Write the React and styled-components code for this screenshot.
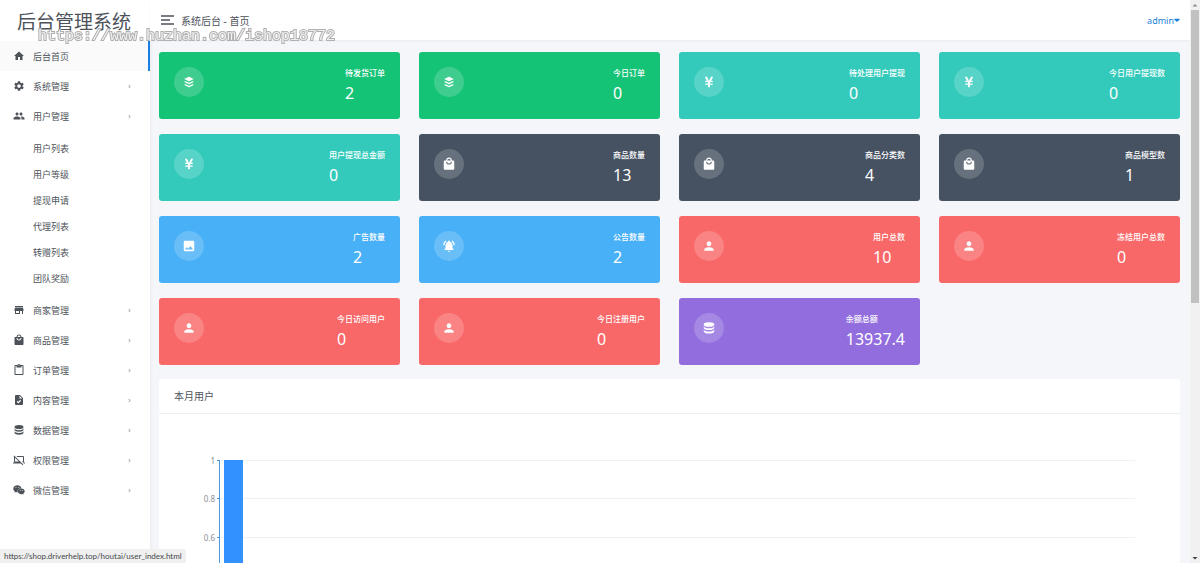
import styled, { createGlobalStyle, css } from "styled-components"
import {
    MdHome, MdSettings, MdPeople, MdStore, MdLocalMall, MdOutlineContentPaste,
    MdChevronRight, MdNotificationsActive, MdPerson, MdImage
} from "react-icons/md"
import { FaBuffer, FaYenSign, FaWeixin, FaCaretDown } from "react-icons/fa"

function FileCheckIcon() {
    return (
        <svg viewBox="0 0 24 24" fill="currentColor" fillRule="evenodd">
            <path d="M14 2H6a2 2 0 0 0-2 2v16a2 2 0 0 0 2 2h12a2 2 0 0 0 2-2V8l-6-6zM13 3.500 18.500 9H13V3.500zM10.500 19l5.500-5.500-1.500-1.800-4 4-1.700-1.700L7.300 15.500z" />
        </svg>
    )
}

function LaptopOffIcon() {
    return (
        <svg viewBox="0 0 24 24" fill="currentColor" fillRule="evenodd">
            <path d="M1 4.270 2.280 3 20.500 21.220 19.230 22.500 15.730 19H0v-2h4a2 2 0 0 1-2-2V6c0-.22.04-.43.1-.63L1 4.270zM4 15h7.730L4 7.270V15z" />
            <path d="M20 4a2 2 0 0 1 2 2v9a2 2 0 0 1-2 2h4v2h-2.180l-4-4H20V6H8.820l-2-2H20z" />
        </svg>
    )
}

function DadosIcon() {
    return (
        <svg viewBox="0 0 24 24" fill="currentColor">
            <ellipse cx="12" cy="6" rx="9" ry="4" />
            <path d="M3 8.500c0 2.200 4 4 9 4s9-1.800 9-4v3c0 2.200-4 4-9 4s-9-1.800-9-4z" />
            <path d="M3 14c0 2.200 4 4 9 4s9-1.800 9-4v3.500c0 2.200-4 4-9 4s-9-1.800-9-4z" />
        </svg>
    )
}

const menu = [
    { nome: "后台首页", Icone: MdHome, ativo: true },
    { nome: "系统管理", Icone: MdSettings },
    {
        nome: "用户管理",
        Icone: MdPeople,
        filhos: ["用户列表", "用户等级", "提现申请", "代理列表", "转赠列表", "团队奖励"]
    },
    { nome: "商家管理", Icone: MdStore },
    { nome: "商品管理", Icone: MdLocalMall },
    { nome: "订单管理", Icone: MdOutlineContentPaste },
    { nome: "内容管理", Icone: FileCheckIcon },
    { nome: "数据管理", Icone: DadosIcon },
    { nome: "权限管理", Icone: LaptopOffIcon },
    { nome: "微信管理", Icone: FaWeixin },
]

const cores = {
    verde: "#15c377",
    ciano: "#33cabb",
    escuro: "#465161",
    azul: "#48b0f7",
    vermelho: "#f96868",
    roxo: "#926dde",
}

const cards = [
    { nome: "待发货订单", valor: "2", cor: cores.verde, Icone: FaBuffer },
    { nome: "今日订单", valor: "0", cor: cores.verde, Icone: FaBuffer },
    { nome: "待处理用户提现", valor: "0", cor: cores.ciano, Icone: FaYenSign },
    { nome: "今日用户提现数", valor: "0", cor: cores.ciano, Icone: FaYenSign },
    { nome: "用户提现总金额", valor: "0", cor: cores.ciano, Icone: FaYenSign },
    { nome: "商品数量", valor: "13", cor: cores.escuro, Icone: MdLocalMall, grande: true },
    { nome: "商品分类数", valor: "4", cor: cores.escuro, Icone: MdLocalMall, grande: true },
    { nome: "商品模型数", valor: "1", cor: cores.escuro, Icone: MdLocalMall, grande: true },
    { nome: "广告数量", valor: "2", cor: cores.azul, Icone: MdImage, grande: true },
    { nome: "公告数量", valor: "2", cor: cores.azul, Icone: MdNotificationsActive, grande: true },
    { nome: "用户总数", valor: "10", cor: cores.vermelho, Icone: MdPerson, grande: true },
    { nome: "冻结用户总数", valor: "0", cor: cores.vermelho, Icone: MdPerson, grande: true },
    { nome: "今日访问用户", valor: "0", cor: cores.vermelho, Icone: MdPerson, grande: true },
    { nome: "今日注册用户", valor: "0", cor: cores.vermelho, Icone: MdPerson, grande: true },
    { nome: "余额总额", valor: "13937.4", cor: cores.roxo, Icone: DadosIcon, grande: true },
]

const escala = ["1", "0.8", "0.6"]

function ItemMenu({ item }) {
    const { nome, Icone, ativo, filhos } = item

    return (
        <li>
            <LinkMenu href="#" $ativo={ativo}>
                <Icone />
                <span>{nome}</span>
                {!ativo && <SetaMenu />}
            </LinkMenu>
            {filhos && <SubMenu>
                {filhos.map(filho => (
                    <li key={filho}>
                        <LinkSubMenu href="#">{filho}</LinkSubMenu>
                    </li>
                ))}
            </SubMenu>}
        </li>
    )
}

function CardResumo({ card }) {
    const { nome, valor, cor, Icone, grande } = card

    return (
        <CardWrapper $cor={cor}>
            <Circulo $grande={grande}><Icone /></Circulo>
            <div>
                <NomeCard>{nome}</NomeCard>
                <ValorCard>{valor}</ValorCard>
            </div>
        </CardWrapper>
    )
}

function GraficoUsuarios() {
    return (
        <Grafico role="img" aria-label="本月用户">
            {escala.map((valor, i) => {
                const y = 12.5 + Math.round(i * 38.4)
                return (
                    <g key={valor}>
                        <text x="26" y={y + 3} textAnchor="end">{valor}</text>
                        <line x1="31" x2="100%" y1={y} y2={y} stroke="#edf2f5" />
                        <line x1="28" x2="31" y1={y} y2={y} stroke="#4b96dc" />
                    </g>
                )
            })}
            <line x1="30.5" x2="30.5" y1="12" y2="205" stroke="#4b96dc" />
            <rect x="35" y="12" width="19" height="192" fill="#3391ff" />
        </Grafico>
    )
}

export default function App() {
    return (
        <>
            <EstiloGlobal />
            <Pagina>
                <BarraLateral>
                    <Logo href="#">后台管理系统</Logo>
                    <nav>
                        <ListaMenu>
                            {menu.map(item => <ItemMenu key={item.nome} item={item} />)}
                        </ListaMenu>
                    </nav>
                </BarraLateral>
                <Conteudo>
                    <Topo>
                        <BotaoMenu aria-label="菜单">
                            <svg width="13" height="10" viewBox="0 0 13 10" stroke="currentColor" strokeWidth="1.3">
                                <path d="M0 1h13M0 5h9M0 9h13" />
                            </svg>
                        </BotaoMenu>
                        <Titulo>系统后台 - 首页</Titulo>
                        <BotaoUsuario>admin<FaCaretDown /></BotaoUsuario>
                    </Topo>
                    <Principal>
                        <GradeCards>
                            {cards.map(card => <CardResumo key={card.nome} card={card} />)}
                        </GradeCards>
                        <Painel>
                            <TituloPainel>本月用户</TituloPainel>
                            <CorpoPainel>
                                <GraficoUsuarios />
                            </CorpoPainel>
                        </Painel>
                    </Principal>
                </Conteudo>
                <Rolagem aria-hidden="true">
                    <SetaRolagem viewBox="0 0 10 10" fill="#8a8a8a"><path d="M2.500 6.500h5L5 4z" /></SetaRolagem>
                    <Polegar />
                    <SetaRolagem viewBox="0 0 10 10" fill="#404040"><path d="M2.500 4h5L5 6.500z" /></SetaRolagem>
                </Rolagem>
            </Pagina>
            <MarcaDagua>https://www.huzhan.com/ishop18772</MarcaDagua>
            <StatusLink>https://shop.driverhelp.top/houtai/user_index.html</StatusLink>
        </>
    )
}

const EstiloGlobal = createGlobalStyle`
* {
box-sizing: border-box;
}
body {
margin: 0;
overflow: hidden;
background-color: #f5f6fa;
color: #4d5259;
font-family: "Noto Sans", "Noto Sans CJK SC", sans-serif;
font-size: 9px;
}
ul, h1, h2, p {
margin: 0;
padding: 0;
font-weight: 400;
list-style-type: none;
}
a {
color: inherit;
text-decoration: none;
}
button {
display: flex;
align-items: center;
padding: 0;
border: none;
background: none;
color: inherit;
font: inherit;
cursor: pointer;
}
`

const Pagina = styled.div`
display: flex;
height: 100vh;
overflow: hidden;
`

const BarraLateral = styled.aside`
flex: none;
width: 150px;
background-color: white;
box-shadow: 0 0 4px rgba(0, 0, 0, 0.08);
`

const Logo = styled.a`
display: flex;
align-items: center;
height: 41px;
padding-left: 17px;
font-family: KaiTi, STKaiti, "Noto Sans CJK SC", sans-serif;
font-size: 19px;
line-height: 20px;
white-space: nowrap;
`

const ListaMenu = styled.ul`
display: flex;
flex-direction: column;
`

const LinkMenu = styled.a`
display: flex;
align-items: center;
gap: 8px;
height: 30px;
padding: 0 17px 0 13px;
${props => props.$ativo && css`
background-color: #fafafa;
border-right: 2px solid #1a7fe0;
`}
svg {
width: 12px;
height: 12px;
}
span {
flex: 1;
}
`

const SetaMenu = styled(MdChevronRight)`
&& {
width: 7px;
height: 7px;
color: #888d93;
}
`

const SubMenu = styled.ul`
padding: 4px 0;
`

const LinkSubMenu = styled.a`
display: flex;
align-items: center;
height: 26px;
padding-left: 33px;
`

const Conteudo = styled.div`
flex: 1;
min-width: 0;
display: flex;
flex-direction: column;
`

const Topo = styled.header`
flex: none;
display: flex;
align-items: center;
height: 40px;
padding: 0 10px 0 11px;
background-color: white;
box-shadow: 0 1px 2px rgba(0, 0, 0, 0.05);
`

const BotaoMenu = styled.button`
margin-right: 7px;
`

const Titulo = styled.h1`
flex: 1;
font-size: 10px;
`

const BotaoUsuario = styled.button`
color: #1a7fd8;
svg {
width: 6px;
height: 10px;
}
`

const Principal = styled.main`
flex: 1;
min-height: 0;
overflow: hidden;
padding: 12px 10px 0 9px;
`

const GradeCards = styled.div`
display: grid;
grid-template-columns: repeat(4, 1fr);
gap: 15px 19px;
margin-bottom: 14px;
`

const CardWrapper = styled.section`
display: flex;
justify-content: space-between;
align-items: flex-start;
padding: 15px 15px 12px;
border-radius: 3px;
background-color: ${props => props.$cor};
color: white;
`

const Circulo = styled.div`
display: flex;
align-items: center;
justify-content: center;
width: 30px;
height: 30px;
border-radius: 50%;
background-color: rgba(255, 255, 255, 0.18);
svg {
width: ${props => props.$grande ? '14px' : '12px'};
height: ${props => props.$grande ? '14px' : '12px'};
}
`

const NomeCard = styled.p`
font-size: 8px;
font-weight: 500;
line-height: 12px;
`

const ValorCard = styled.p`
font-size: 16px;
line-height: 28px;
`

const Painel = styled.section`
border-radius: 3px;
background-color: white;
`

const TituloPainel = styled.h2`
padding: 0 15px;
border-bottom: 1px solid #eceff2;
font-size: 10px;
line-height: 34px;
`

const CorpoPainel = styled.div`
padding: 34px 45px 15px 30px;
`

const Grafico = styled.svg`
display: block;
width: 100%;
height: 220px;
text {
fill: #8a919a;
font-size: 8px;
}
`

const Rolagem = styled.div`
flex: none;
display: flex;
flex-direction: column;
width: 10px;
background-color: #f1f1f1;
`

const SetaRolagem = styled.svg`
width: 10px;
height: 10px;
`

const Polegar = styled.div`
flex: none;
height: 52%;
width: 8px;
margin: 0 1px auto;
background-color: #c1c1c1;
`

const MarcaDagua = styled.div`
position: fixed;
top: 27px;
left: 38px;
color: rgba(255, 255, 255, 0.8);
font-family: SimSun, "Liberation Mono", monospace;
font-size: 15px;
line-height: 20px;
paint-order: stroke fill;
-webkit-text-stroke: 2px #b0b0b0;
pointer-events: none;
`

const StatusLink = styled.div`
position: fixed;
bottom: 0;
left: 0;
padding: 0 4px;
border-radius: 0 3px 0 0;
background-color: #f0f0f0;
color: #45484c;
font-family: Lato, sans-serif;
font-size: 8px;
line-height: 14px;
`
